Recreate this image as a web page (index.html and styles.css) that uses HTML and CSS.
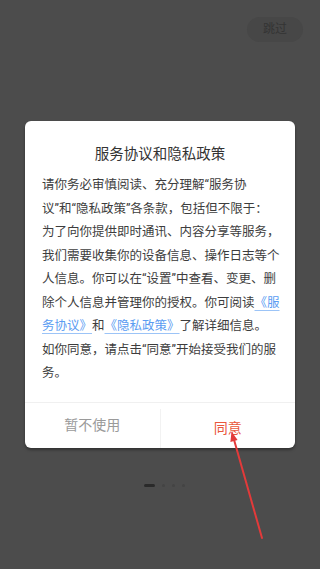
FILE: index.html
```html
<!DOCTYPE html>
<html lang="zh-CN">
<head>
<meta charset="utf-8">
<link rel="stylesheet" href="styles.css">
</head>
<body>
<div class="screen">
  <div class="topbar">
    <div class="skip">跳过</div>
  </div>
  <div class="dialog">
    <div class="title">服务协议和隐私政策</div>
    <div class="content">
      <div class="line">请你务必审慎阅读、充分理解“服务协</div>
      <div class="line">议”和“隐私政策”各条款，包括但不限于：</div>
      <div class="line">为了向你提供即时通讯、内容分享等服务，</div>
      <div class="line">我们需要收集你的设备信息、操作日志等个</div>
      <div class="line">人信息。你可以在“设置”中查看、变更、删</div>
      <div class="line">除个人信息并管理你的授权。你可阅读<span class="link">《服</span></div>
      <div class="line"><span class="link">务协议》</span>和<span class="link">《隐私政策》</span>了解详细信息。</div>
      <div class="line">如你同意，请点击“同意”开始接受我们的服</div>
      <div class="line">务。</div>
    </div>
    <div class="actions">
      <div class="btn btn-cancel">暂不使用</div>
      <div class="btn btn-ok">同意</div>
    </div>
  </div>
  <div class="indicator">
    <span class="dash"></span>
    <span class="dot"></span>
    <span class="dot"></span>
    <span class="dot"></span>
  </div>
  <svg class="arrow" width="320" height="569" viewBox="0 0 320 569">
    <line x1="233.8" y1="439" x2="262" y2="538" stroke="#e23a3a" stroke-width="2" stroke-linecap="round"/>
    <polygon points="231.5,431.5 237.6,440 230.4,442" fill="#e23a3a"/>
  </svg>
</div>
</body>
</html>
```
FILE: styles.css
```css
html, body {
  margin: 0;
  padding: 0;
}
body {
  font-family: Roboto, "Noto Sans CJK SC", sans-serif;
  background: #4c4c4c;
}
.screen {
  position: relative;
  width: 320px;
  height: 569px;
  overflow: hidden;
  background: #4c4c4c;
  display: flex;
  flex-direction: column;
  align-items: center;
}
.topbar {
  align-self: stretch;
  display: flex;
  justify-content: flex-end;
  padding: 17px 17px 0 0;
}
.skip {
  width: 56px;
  height: 25px;
  border-radius: 13px;
  background: #474747;
  color: #343434;
  font-size: 12px;
  line-height: 25px;
  text-align: center;
}
.dialog {
  margin-top: 79px;
  width: 270px;
  background: #fff;
  border-radius: 6px;
  box-shadow: 0 2px 3px rgba(0, 0, 0, 0.35);
  display: flex;
  flex-direction: column;
}
.title {
  padding-top: 24px;
  font-size: 14.5px;
  line-height: 20px;
  color: #333;
  text-align: center;
}
.content {
  padding: 8px 0 0 17px;
  font-size: 12.5px;
  line-height: 23.5px;
  color: #3d3d3d;
}
.line {
  white-space: nowrap;
}
.link {
  color: #5a9cf2;
  text-decoration: underline;
  text-decoration-color: #9cc4f7;
  text-underline-offset: 3px;
}
.actions {
  margin-top: 17px;
  border-top: 1px solid #f0f0f0;
  height: 45px;
  display: flex;
}
.btn {
  flex: 1;
  font-size: 14px;
  line-height: 45px;
  text-align: center;
}
.btn-cancel {
  color: #9a9a9a;
}
.btn-ok {
  color: #e9573c;
  border-left: 1px solid #f2f2f2;
  margin-top: 6px;
  line-height: 39px;
}
.indicator {
  margin-top: 36px;
  display: flex;
  align-items: center;
  gap: 7px;
  margin-left: 8px;
}
.dash {
  width: 11px;
  height: 3px;
  border-radius: 2px;
  background: #2a2a2a;
}
.dot {
  width: 3px;
  height: 3px;
  border-radius: 50%;
  background: #444;
}
.arrow {
  position: absolute;
  left: 0;
  top: 0;
  pointer-events: none;
}
```
